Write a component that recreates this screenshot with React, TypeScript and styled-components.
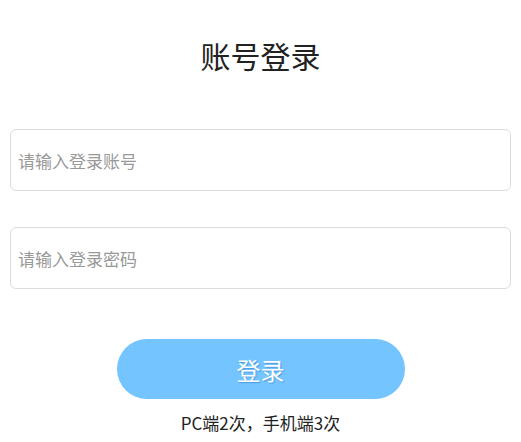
import React from 'react'
import styled, { createGlobalStyle } from 'styled-components'

const GlobalStyle = createGlobalStyle`
  html, body {
    margin: 0;
    padding: 0;
    background: #fff;
    font-family: "Noto Sans CJK SC", "Noto Sans", sans-serif;
  }
`

const Page = styled.div`
  width: 521px;
  height: 442px;
  box-sizing: border-box;
  padding: 33px 10px 0 10px;
  display: flex;
  flex-direction: column;
  align-items: center;
`

const Title = styled.h1`
  margin: 0;
  font-size: 30px;
  font-weight: 400;
  line-height: 44px;
  color: #222;
`

const Form = styled.div`
  width: 100%;
  margin-top: 52px;
  display: flex;
  flex-direction: column;
  gap: 36px;
`

const Input = styled.input`
  width: 100%;
  height: 62px;
  box-sizing: border-box;
  border: 1px solid #dcdcdc;
  border-radius: 6px;
  padding: 0 7px;
  font-family: inherit;
  font-size: 17px;
  color: #333;
  outline: none;
  &::placeholder {
    color: #999;
  }
`

const Button = styled.button`
  margin-top: 50px;
  width: 288px;
  height: 60px;
  border: none;
  border-radius: 30px;
  background: #73c4ff;
  color: #fff;
  font-family: inherit;
  font-size: 24px;
  text-shadow: 1px 1px 1px rgba(0, 80, 160, 0.35);
  cursor: pointer;
`

const Note = styled.p`
  margin: 12px 0 0 0;
  font-size: 17px;
  line-height: 24px;
  color: #222;
`

export default function App() {
  return (
    <>
      <GlobalStyle />
      <Page>
        <Title>账号登录</Title>
        <Form>
          <Input placeholder="请输入登录账号" />
          <Input type="password" placeholder="请输入登录密码" />
        </Form>
        <Button>登录</Button>
        <Note>PC端2次，手机端3次</Note>
      </Page>
    </>
  )
}
